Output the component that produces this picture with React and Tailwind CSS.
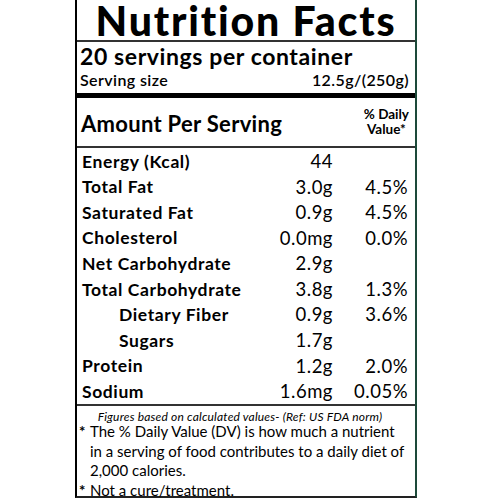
import React from "react";

const rows = [
  { label: "Energy (Kcal)", value: "44", dv: "" },
  { label: "Total Fat", value: "3.0g", dv: "4.5%" },
  { label: "Saturated Fat", value: "0.9g", dv: "4.5%" },
  { label: "Cholesterol", value: "0.0mg", dv: "0.0%" },
  { label: "Net Carbohydrate", value: "2.9g", dv: "" },
  { label: "Total Carbohydrate", value: "3.8g", dv: "1.3%" },
  { label: "Dietary Fiber", value: "0.9g", dv: "3.6%", indent: true },
  { label: "Sugars", value: "1.7g", dv: "", indent: true },
  { label: "Protein", value: "1.2g", dv: "2.0%" },
  { label: "Sodium", value: "1.6mg", dv: "0.05%" },
];

const NutrientRow = ({ row }) => (
  <div className="flex items-center h-[25.6px] pr-[7px]">
    <div
      className={`flex-1 font-bold text-[17.5px] tracking-[0.6px] text-black ${
        row.indent ? "pl-[42px]" : "pl-[5px]"
      }`}
    >
      {row.label}
    </div>
    <div className="w-[80px] text-right text-[18.5px] tracking-[0.5px] text-black">{row.value}</div>
    <div className="w-[75px] text-right text-[18.5px] tracking-[0.5px] text-black">{row.dv}</div>
  </div>
);

const App = () => {
  return (
    <div className="w-[500px] h-[500px] bg-white font-['Lato',sans-serif] overflow-hidden">
      <div className="ml-[75px] w-[342px] border-l-2 border-l-black border-r-2 border-r-[#1d4a3a] border-b-2 border-b-[#222]">
        <div className="h-[42px] border-b-2 border-[#333] text-center">
          <h1 className="text-[41px] font-black leading-[41px] tracking-[1.8px] text-black">
            Nutrition Facts
          </h1>
        </div>

        <div className="h-[51px] px-[3px] pt-[1px]">
          <div className="text-[23px] font-bold leading-[27px] tracking-[0.6px] text-black">
            20 servings per container
          </div>
          <div className="flex justify-between text-[16px] font-semibold leading-[19px] tracking-[0.4px] text-black pr-[3px]">
            <span>Serving size</span>
            <span>12.5g/(250g)</span>
          </div>
        </div>

        <div className="h-[5px] bg-black" />

        <div className="h-[50px] flex items-center justify-between pl-[4px] pr-[6px] border-b-2 border-[#333]">
          <div className="text-[22px] font-bold tracking-[0.3px] text-black mt-[3px]">Amount Per Serving</div>
          <div className="text-[13.5px] font-bold leading-[15px] text-center text-black">
            % Daily
            <br />
            Value*
          </div>
        </div>

        <div className="pt-[1px] border-b-2 border-[#333] h-[258px]">
          {rows.map((row) => (
            <NutrientRow key={row.label} row={row} />
          ))}
        </div>

        <div className="h-[90px] pt-[5px] text-black">
          <div className="text-[12px] italic text-center leading-[11px] tracking-[0.2px] pr-[12px]">
            Figures based on calculated values- (Ref: US FDA norm)
          </div>
          <div className="flex text-[15px] leading-[19.5px] pl-[2px]">
            <span className="w-[11px] font-bold">*</span>
            <span className="flex-1">
              The % Daily Value (DV) is how much a nutrient
              <br />
              in a serving of food contributes to a daily diet of
              <br />
              2,000 calories.
            </span>
          </div>
          <div className="flex text-[15px] leading-[19px] pl-[2px]">
            <span className="w-[11px] font-bold">*</span>
            <span>Not a cure/treatment.</span>
          </div>
        </div>
      </div>
    </div>
  );
};

export default App;
